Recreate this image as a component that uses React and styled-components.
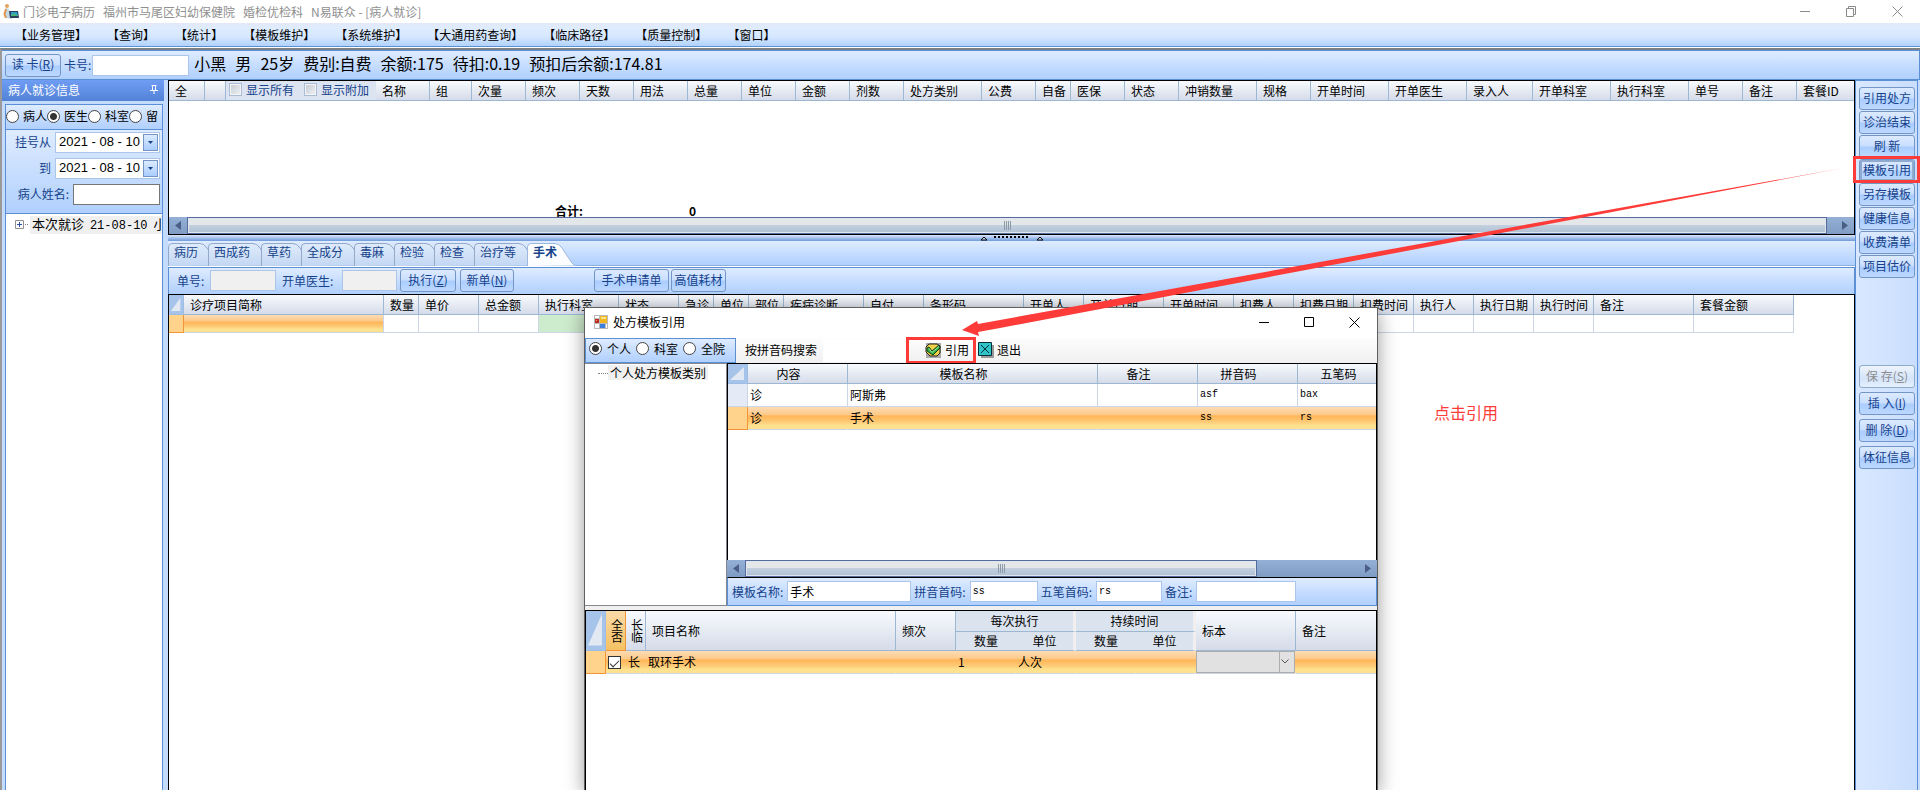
import { Fragment } from "react";
import styled, { createGlobalStyle, css } from "styled-components";

const menus = ["业务管理", "查询", "统计", "模板维护", "系统维护", "大通用药查询", "临床路径", "质量控制", "窗口"];

const patient = ["小黑", "男", "25岁", "费别:自费", "余额:175", "待扣:0.19", "预扣后余额:174.81"];

const orderColumns = [
  ["组", 42], ["次量", 54], ["频次", 54], ["天数", 54], ["用法", 54], ["总量", 54],
  ["单位", 54], ["金额", 54], ["剂数", 54], ["处方类别", 78], ["公费", 54], ["自备", 35],
  ["医保", 54], ["状态", 54], ["冲销数量", 78], ["规格", 54], ["开单时间", 78], ["开单医生", 78],
  ["录入人", 66], ["开单科室", 78], ["执行科室", 78], ["单号", 54], ["备注", 54], ["套餐ID", 78],
];

const itemColumns = [
  ["诊疗项目简称", 200], ["数量", 35], ["单价", 60], ["总金额", 60], ["执行科室", 80], ["状态", 60],
  ["急诊", 35], ["单位", 35], ["部位", 35], ["疾病诊断", 80], ["自付", 60], ["条形码", 100],
  ["开单人", 60], ["开单日期", 80], ["开单时间", 70], ["扣费人", 60], ["扣费日期", 60], ["扣费时间", 60],
  ["执行人", 60], ["执行日期", 60], ["执行时间", 60], ["备注", 100], ["套餐金额", 100],
];

const templateColumns = [["内容", 100], ["模板名称", 250], ["备注", 100], ["拼音码", 100], ["五笔码", 100]];

const templates = [
  { type: "诊", name: "阿斯弗", remark: "", pinyin: "asf", wubi: "bax" },
  { type: "诊", name: "手术", remark: "", pinyin: "ss", wubi: "rs", selected: true },
];

const tabs = [
  ["病历", 40], ["西成药", 53], ["草药", 40], ["全成分", 53], ["毒麻", 40],
  ["检验", 40], ["检查", 40], ["治疗等", 53], ["手术", 48],
];

const railButtons = ["引用处方", "诊治结束", "刷 新", "模板引用", "另存模板", "健康信息", "收费清单", "项目估价"];

const TabShape = ({ width, active }) => {
  const w = width + (active ? 1 : 13);
  return (
    <TabDrawing width={w} height="23" viewBox={`0 0 ${w} 23`}>
      <path
        d={`M.5 23V4Q.5 .5 4 .5H${w - 21}Q${w - 17} .5 ${w - 14} 5L${w - 4} 20Q${w - 2} 22.5 ${w} 22.5`}
        fill={active ? "#fcfdff" : "url(#tabFill)"}
        stroke={active ? "#9db8de" : "#93a9c9"}
      />
    </TabDrawing>
  );
};

const ScrollBar = ({ thumb }) => (
  <ScrollTrack>
    <ScrollButton type="button" aria-label="向左">
      <svg width="6" height="9"><path d="M6 0V9L0 4.5Z" fill="#4b5f86" /></svg>
    </ScrollButton>
    <Thumb $width={thumb}><i /><i /><i /><i /></Thumb>
    <ScrollButton type="button" aria-label="向右" $end>
      <svg width="6" height="9"><path d="M0 0V9L6 4.5Z" fill="#4b5f86" /></svg>
    </ScrollButton>
  </ScrollTrack>
);

const WindowButtons = ({ color, large }) => (
  <Controls $large={large}>
    <button type="button" aria-label="最小化">
      <svg width="11" height="11"><path d="M0 5.5H10" stroke={color} /></svg>
    </button>
    <button type="button" aria-label="最大化">
      <svg width="11" height="11" fill="none" stroke={color}>
        {large ? <path d="M.5 .5H9.5V9.5H.5Z" /> : <path d="M.5 2.5H7.5V10.5H.5ZM2.5 2.5V.5H9.5V8.5H7.5" />}
      </svg>
    </button>
    <button type="button" aria-label="关闭">
      <svg width="11" height="11"><path d="M.5 .5L10.5 10.5M10.5 .5L.5 10.5" stroke={color} /></svg>
    </button>
  </Controls>
);

const Corner = ({ tall }) => (
  <CornerCell rowSpan={tall ? 2 : 1}>
    <svg width="100%" height={tall ? 34 : 14} viewBox="0 0 14 14" preserveAspectRatio="none">
      <path d="M13 0V13H0Z" fill="#e3e9f3" />
    </svg>
  </CornerCell>
);

const DateField = ({ id }) => (
  <DateBox>
    <input id={id} defaultValue="2021 - 08 - 10" />
    <DropButton type="button" aria-label="选择日期">
      <svg width="5" height="3"><path d="M0 0H5L2.5 3Z" fill="#15428b" /></svg>
    </DropButton>
  </DateBox>
);

const Sidebar = () => (
  <Side>
    <SideHeader>
      病人就诊信息
      <svg width="8" height="9" fill="none" stroke="#fff"><path d="M1.5 .5H6.5M2.5 .5V5M5.5 .5V5M0 5.5H8M4 5.5V9" /></svg>
    </SideHeader>
    <SidePanel>
      <RadioRow>
        <label><Radio name="scope" />病人</label>
        <label><Radio name="scope" defaultChecked />医生</label>
        <label><Radio name="scope" />科室</label>
        <label><Radio name="scope" />留</label>
      </RadioRow>
      <Filters>
        <FilterRow>
          <label htmlFor="from">挂号从</label>
          <DateField id="from" />
        </FilterRow>
        <FilterRow>
          <label htmlFor="to">到</label>
          <DateField id="to" />
        </FilterRow>
        <FilterRow>
          <label htmlFor="patient">病人姓名:</label>
          <Field id="patient" $width={87} $dark />
        </FilterRow>
      </Filters>
      <Tree>
        <svg width="14" height="9" fill="none">
          <path d="M.5 .5H8.5V8.5H.5Z" stroke="#919191" />
          <path d="M2 4.5H7M4.5 2V7" stroke="#2b4fa0" />
          <path d="M10 4.5H14" stroke="#808080" strokeDasharray="1 1" />
        </svg>
        <TreeLabel $large>本次就诊 <span>21-08-10</span> 小</TreeLabel>
      </Tree>
    </SidePanel>
  </Side>
);

const Orders = () => (
  <OrderPane>
    <GridArea>
      <Grid>
        <colgroup>
          <col width="36" /><col width="21" /><col width="204" />
          {orderColumns.map(([name, width]) => <col key={name} width={width} />)}
        </colgroup>
        <thead>
          <tr>
            <th>全</th>
            <th />
            <ToggleCell>
              <div>
                <ToggleGroup>
                  <label><Tick type="checkbox" $flat />显示所有</label>
                  <label><Tick type="checkbox" $flat />显示附加</label>
                </ToggleGroup>
                名称
              </div>
            </ToggleCell>
            {orderColumns.map(([name]) => <th key={name}>{name}</th>)}
          </tr>
        </thead>
      </Grid>
      <Totals><span>合计:</span><span>0</span></Totals>
    </GridArea>
    <ScrollBar />
  </OrderPane>
);

const Items = () => (
  <ItemPane>
    <TabBar>
      <svg width="0" height="0">
        <linearGradient id="tabFill" x2="0" y2="1">
          <stop stopColor="#dfebfb" />
          <stop offset="1" stopColor="#c3d7f3" />
        </linearGradient>
      </svg>
      {tabs.map(([name, width], i) => (
        <Tab key={name} type="button" $width={width} $active={i === 8}>
          <TabShape width={width} active={i === 8} />
          <span>{name}</span>
        </Tab>
      ))}
    </TabBar>
    <ItemTools>
      <label htmlFor="no">单号:</label>
      <Field id="no" $width={66} $muted />
      <label htmlFor="doctor">开单医生:</label>
      <Field id="doctor" $width={55} $muted />
      <Button type="button" $width={56}>执行(<u>Z</u>)</Button>
      <Button type="button" $width={54}>新单(<u>N</u>)</Button>
      <ToolGroup>
        <Button type="button" $width={75}>手术申请单</Button>
        <Button type="button" $width={55}>高值耗材</Button>
      </ToolGroup>
    </ItemTools>
    <ItemGrid>
      <Grid>
        <colgroup>
          <col width="15" />
          {itemColumns.map(([name, width]) => <col key={name} width={width} />)}
        </colgroup>
        <thead>
          <tr><Corner />{itemColumns.map(([name]) => <th key={name}>{name}</th>)}</tr>
        </thead>
        <tbody>
          <tr>
            <IndicatorCell $selected />
            {itemColumns.map(([name], i) => <ItemCell key={name} $focus={i === 0} $green={i === 4} />)}
          </tr>
        </tbody>
      </Grid>
      <Note>点击引用</Note>
    </ItemGrid>
  </ItemPane>
);

const TemplateDialog = () => (
  <Dialog>
    <DialogTitle>
      <svg width="14" height="14">
        <path d="M0 0H14V14H0Z" fill="#b9b9b9" />
        <path d="M1 1H5V3H1ZM1 9H5V13H1Z" fill="#fff" />
        <path d="M1 4H5V8H1Z" fill="#c22a1b" />
        <path d="M2 5H3V6H2Z" fill="#f0a090" />
        <path d="M6 1H13V8H6Z" fill="#f2b71f" />
        <path d="M7 2H12V4H7Z" fill="#ffe38a" />
        <path d="M6 9H11V13H6Z" fill="#3d7fe0" />
        <path d="M12 9H13V13H12Z" fill="#fff" />
      </svg>
      处方模板引用
      <WindowButtons color="#000" large />
    </DialogTitle>
    <DialogTools>
      <ScopeBox>
        <label><Radio name="template" defaultChecked />个人</label>
        <label><Radio name="template" />科室</label>
        <label><Radio name="template" />全院</label>
      </ScopeBox>
      <label htmlFor="search">按拼音码搜索</label>
      <SearchInput id="search" />
      <ApplyButton type="button">
        <svg width="17" height="16">
          <path d="M1 1H16V16H1Z" fill="#a9a9a9" />
          <path d="M1 5L4 2H12L15 4V11L12 14H5L1 10Z" fill="#efd24a" stroke="#222" />
          <path d="M2 6L4 5L7 9L14 3L15 6L8 13L2 9Z" fill="#33b24a" stroke="#123d18" />
          <path d="M4 6.5L7 10.5L14 4.5" fill="none" stroke="#a5e6a0" />
        </svg>
        引用
      </ApplyButton>
      <ToolButton type="button">
        <svg width="16" height="16">
          <path d="M3 3H16V16H3Z" fill="#999" />
          <path d="M.5 .5H13.5V13.5H.5Z" fill="#2fc4c8" stroke="#052f38" />
          <path d="M3 3L11 11M11 3L3 11" stroke="#052f38" />
        </svg>
        退出
      </ToolButton>
    </DialogTools>
    <DialogTop>
      <TemplateTree><i /><TreeLabel>个人处方模板类别</TreeLabel></TemplateTree>
      <TemplatePane>
        <TemplateGrid>
          <Grid $centered>
            <colgroup>
              <col width="20" />
              {templateColumns.map(([name, width]) => <col key={name} width={width} />)}
            </colgroup>
            <thead>
              <tr><Corner />{templateColumns.map(([name]) => <th key={name}>{name}</th>)}</tr>
            </thead>
            <tbody>
              {templates.map((row) => (
                <Row key={row.name} $selected={row.selected}>
                  <IndicatorCell $selected={row.selected} />
                  <td>{row.type}</td>
                  <td>{row.name}</td>
                  <td>{row.remark}</td>
                  <CodeCell>{row.pinyin}</CodeCell>
                  <CodeCell>{row.wubi}</CodeCell>
                </Row>
              ))}
            </tbody>
          </Grid>
        </TemplateGrid>
        <ScrollBar thumb={512} />
        <TemplateForm>
          <label htmlFor="tname">模板名称:</label>
          <Field id="tname" $width={124} defaultValue="手术" />
          <label htmlFor="tpinyin">拼音首码:</label>
          <Field id="tpinyin" $width={68} $code defaultValue="ss" />
          <label htmlFor="twubi">五笔首码:</label>
          <Field id="twubi" $width={66} $code defaultValue="rs" />
          <label htmlFor="tremark">备注:</label>
          <Field id="tremark" $width={100} />
        </TemplateForm>
      </TemplatePane>
    </DialogTop>
    <DetailGrid>
      <Grid>
        <colgroup>
          {[20, 20, 20, 250, 60, 60, 60, 60, 60, 100, 100].map((width, i) => <col key={i} width={width} />)}
        </colgroup>
        <thead>
          <tr>
            <Corner tall />
            <StackedHead rowSpan="2" $hot>全否</StackedHead>
            <StackedHead rowSpan="2">长临</StackedHead>
            <th rowSpan="2">项目名称</th>
            <th rowSpan="2">频次</th>
            <GroupHead colSpan="2">每次执行</GroupHead>
            <GroupHead colSpan="2">持续时间</GroupHead>
            <th rowSpan="2">标本</th>
            <th rowSpan="2">备注</th>
          </tr>
          <tr>
            {[0, 1].map((n) => (
              <Fragment key={n}>
                <SubHead>数量</SubHead>
                <SubHead $last>单位</SubHead>
              </Fragment>
            ))}
          </tr>
        </thead>
        <tbody>
          <Row $selected>
            <IndicatorCell $selected />
            <TickCell><Tick type="checkbox" aria-label="选择取环手术" defaultChecked /></TickCell>
            <td>长</td>
            <td>取环手术</td>
            <td />
            <td>1</td>
            <td>人次</td>
            <td />
            <td />
            <SampleCell>
              <SampleSelect aria-label="标本" disabled><option /></SampleSelect>
              <svg width="8" height="5"><path d="M.5 .5L4 4L7.5 .5" fill="none" stroke="#555" /></svg>
            </SampleCell>
            <td />
          </Row>
        </tbody>
      </Grid>
    </DetailGrid>
  </Dialog>
);

const App = () => (
  <Screen>
    <Global />
    <TitleBar>
      <svg width="16" height="16">
        <circle cx="4" cy="2" r="2" fill="#e3a55f" />
        <path d="M3 4L6 5L7 10L10 13L9 15L3 14L2 9Z" fill="#c4d9e6" />
        <path d="M3 5L1.5 10L3 14" fill="none" stroke="#dd9550" strokeWidth="2" />
        <path d="M6 7H15L16 14H7Z" fill="#2b3f5a" />
        <path d="M8 8H14L15 12H8Z" fill="#2a9fcf" />
        <path d="M8 11L11 9L15 12H8Z" fill="#4bb27a" />
      </svg>
      <span>门诊电子病历</span>
      <span>福州市马尾区妇幼保健院</span>
      <span>婚检优检科</span>
      <span>N易联众 - [病人就诊]</span>
      <WindowButtons color="#8a8a8a" />
    </TitleBar>
    <MenuBar>{menus.map((name) => <button key={name} type="button">【{name}】</button>)}</MenuBar>
    <Frame>
      <InfoBar>
        <Button type="button" $width={56}>读 卡(<u>R</u>)</Button>
        <label htmlFor="card">卡号:</label>
        <Field id="card" $width={97} />
        <PatientLine>{patient.map((part) => <span key={part}>{part}</span>)}</PatientLine>
      </InfoBar>
      <Body>
        <Sidebar />
        <Center>
          <Orders />
          <Splitter>
            <svg width="64" height="6">
              <path d="M1 5H7L4 2ZM57 5H63L60 2Z" fill="#cfe0fb" stroke="#000" />
              <path d="M14 2H50" stroke="#000" strokeWidth="2" strokeDasharray="2 2" />
            </svg>
          </Splitter>
          <Items />
        </Center>
        <Rail>
          <RailGroup>
            {railButtons.map((name) => (
              <Button key={name} type="button" $width={56} $pressed={name === "模板引用"}>{name}</Button>
            ))}
          </RailGroup>
          <RailGroup $wide>
            <Button type="button" $width={56} disabled>保 存(<u>S</u>)</Button>
            <Button type="button" $width={56}>插 入(<u>I</u>)</Button>
            <Button type="button" $width={56}>删 除(<u>D</u>)</Button>
            <Button type="button" $width={56}>体征信息</Button>
          </RailGroup>
        </Rail>
      </Body>
    </Frame>
    <TemplateDialog />
    <RailMark />
    <Arrow width="884" height="172" viewBox="962 166 884 172">
      <path d="M962 330L977 321L978 324L1000 320L1480 233L1843 168L1480 237L1000 328L978 332L979 336Z" fill="#fd3b38" />
    </Arrow>
  </Screen>
);

const Global = createGlobalStyle`
  * {
    box-sizing: border-box;
  }
  body {
    margin: 0;
    overflow: hidden;
    background: #fff;
  }
  body, button, input, select, table {
    font-family: "Noto Sans CJK SC", "Noto Sans", sans-serif;
    font-size: 12px;
    line-height: 16px;
    color: #000;
  }
  svg {
    flex: none;
    display: block;
  }
  button {
    margin: 0;
    padding: 0;
    border: 0;
    background: none;
    white-space: pre;
  }
  label {
    white-space: nowrap;
  }
`;

const blueBar = css`
  background: linear-gradient(#dfecff, #c6ddff 50%, #b0d0fd);
`;
const headFill = css`
  background: linear-gradient(#f8fafd, #e6ebf3 50%, #d5dbe9);
`;
const hotFill = css`
  background: linear-gradient(#fcdcb4, #fdc988 36%, #ffb557 40%, #fdc873 65%, #fee391 85%, #fee08e);
`;

const Screen = styled.div`
  position: relative;
  display: flex;
  flex-direction: column;
  min-height: 100vh;
  overflow: hidden;
`;
const TitleBar = styled.header`
  display: flex;
  align-items: center;
  gap: 8px;
  height: 23px;
  padding-left: 3px;
  color: #8f8f8f;
  white-space: nowrap;
  svg + span {
    margin-left: -4px;
  }
`;
const Controls = styled.div`
  display: flex;
  margin-left: auto;
  button {
    display: flex;
    align-items: center;
    justify-content: center;
    width: ${({ $large }) => ($large ? 45 : 46)}px;
    height: 20px;
  }
`;
const MenuBar = styled.nav`
  display: flex;
  gap: 20px;
  height: 24px;
  padding: 0 15px;
  border-bottom: 1px solid #5f8fd0;
  background: linear-gradient(#e3e8f8, #deecfe 20%, #d6e7fe 60%, #b0d2fc);
`;
const Frame = styled.div`
  flex: 1;
  display: flex;
  flex-direction: column;
  margin-top: 1px;
  border-top: 2px solid #7d8287;
  border-left: 2px solid #9a9a9a;
`;
const InfoBar = styled.div`
  display: flex;
  align-items: center;
  height: 30px;
  padding-left: 3px;
  border: solid #5b8fd6;
  border-width: 1px 1px 1px 0;
  color: #15428b;
  ${blueBar}
  label {
    margin: 0 1px 0 3px;
  }
`;
const PatientLine = styled.div`
  display: flex;
  gap: 9px;
  margin-left: 5px;
  padding-bottom: 4px;
  font-size: 16px;
  line-height: 24px;
  color: #000;
  white-space: nowrap;
`;
const Button = styled.button`
  flex: none;
  width: ${({ $width }) => $width}px;
  height: 23px;
  padding-bottom: 2px;
  border: 1px solid #7496c6;
  border-radius: 3px;
  color: #15428b;
  background: linear-gradient(#dceaff, #c9deff 48%, #aacdff 52%, #bcd8ff);
  ${({ $pressed }) => $pressed && css`
    box-shadow: inset 0 0 0 2px #8fa9cf;
  `}
  &:disabled {
    color: #8d8d8d;
    border-color: #8facc9;
    background: linear-gradient(#eef4fd, #d4e4fa 60%, #e6f0fe);
  }
`;
const Field = styled.input`
  flex: none;
  width: ${({ $width }) => $width}px;
  height: 21px;
  padding: 0 2px;
  border: 1px solid ${({ $dark }) => ($dark ? "#767676" : "#abc6ea")};
  border-radius: 0;
  background: ${({ $muted }) => ($muted ? "#f0f0f0" : "#fff")};
  ${({ $code }) => $code && css`
    font-family: "Liberation Mono", monospace;
    font-size: 10px;
  `}
`;
const Radio = styled.input.attrs({ type: "radio" })`
  appearance: none;
  flex: none;
  width: 13px;
  height: 13px;
  margin: 0;
  border: 1px solid #444;
  border-radius: 50%;
  background: #fff;
  &:checked {
    background: radial-gradient(circle, #333 3px, #fff 4px);
  }
`;
const Tick = styled.input`
  appearance: none;
  flex: none;
  width: 13px;
  height: 13px;
  margin: 0;
  border: 1px solid #333;
  background: #fff;
  &:checked {
    display: flex;
    align-items: center;
    justify-content: center;
  }
  &:checked::after {
    content: "";
    width: 8px;
    height: 4px;
    border: solid #333;
    border-width: 0 0 1px 1px;
    transform: rotate(-45deg);
  }
  ${({ $flat }) => $flat && css`
    border-color: #a9bcd6;
    background: linear-gradient(135deg, #c4c9d3, #f0f2f5);
    box-shadow: inset 0 0 0 1px #f4f4f4;
  `}
`;
const Body = styled.div`
  flex: 1;
  display: flex;
  background: #c5dbfb;
`;
const Side = styled.aside`
  flex: none;
  display: flex;
  flex-direction: column;
  width: 162px;
  margin-right: 4px;
`;
const SideHeader = styled.div`
  display: flex;
  align-items: center;
  justify-content: space-between;
  height: 21px;
  padding: 0 6px 2px;
  color: #fff;
  background: linear-gradient(#6f9df4, #5282d6);
`;
const SidePanel = styled.div`
  flex: 1;
  display: flex;
  flex-direction: column;
  margin: 3px 1px 0 3px;
  border: 1px solid #5b8fd6;
  border-bottom: 0;
`;
const RadioRow = styled.div`
  display: flex;
  align-items: center;
  height: 25px;
  padding-bottom: 2px;
  border-bottom: 1px solid #5b8fd6;
  ${blueBar}
  label {
    flex: none;
    display: flex;
    align-items: center;
    gap: 4px;
  }
`;
const Filters = styled.div`
  display: flex;
  flex-direction: column;
  gap: 5px;
  height: 84px;
  padding: 2px 2px 0;
  border-bottom: 1px solid #5b8fd6;
  color: #15428b;
  background: linear-gradient(#dfecff, #b0d0fd);
`;
const FilterRow = styled.div`
  display: flex;
  align-items: center;
  justify-content: flex-end;
  gap: 4px;
  label {
    padding-bottom: 2px;
  }
`;
const DateBox = styled.div`
  display: flex;
  align-items: center;
  width: 105px;
  height: 21px;
  padding: 1px;
  border: 1px solid #abc6ea;
  background: #fff;
  input {
    flex: 1;
    min-width: 0;
    padding: 0 0 2px 2px;
    border: 0;
    font-family: "Liberation Sans", sans-serif;
    font-size: 13px;
  }
`;
const DropButton = styled.button`
  display: flex;
  align-items: center;
  justify-content: center;
  width: 15px;
  height: 17px;
  border: 1px solid #7496c6;
  background: linear-gradient(#dceaff, #aacdff);
`;
const Tree = styled.div`
  flex: 1;
  display: flex;
  align-items: flex-start;
  gap: 1px;
  padding: 2px 0 0 9px;
  overflow: hidden;
  background: #fff;
  svg {
    margin-top: 4px;
  }
`;
const TreeLabel = styled.span`
  padding: 0 2px;
  font-size: ${({ $large }) => ($large ? 13 : 12)}px;
  line-height: 15px;
  background: #f0f0f0;
  white-space: nowrap;
  span {
    margin: 0 3px;
    font-family: "Liberation Mono", monospace;
    font-size: 12px;
  }
`;
const Center = styled.main`
  flex: 1;
  display: flex;
  flex-direction: column;
  min-width: 0;
`;
const OrderPane = styled.section`
  display: flex;
  flex-direction: column;
  height: 155px;
  border: 1px solid #000;
`;
const GridArea = styled.div`
  flex: 1;
  display: flex;
  flex-direction: column;
  justify-content: space-between;
  min-height: 0;
  overflow: hidden;
  background: #fff;
`;
const Grid = styled.table`
  width: 0;
  table-layout: fixed;
  border-collapse: separate;
  border-spacing: 0;
  th, td {
    overflow: hidden;
    white-space: nowrap;
    text-align: left;
    font-weight: normal;
  }
  th {
    height: 20px;
    padding: 0 0 0 6px;
    border: solid #9db8d2;
    border-width: 0 1px 1px 0;
    ${headFill}
  }
  td {
    height: 18px;
    padding: 0 0 0 2px;
    border: solid #cdd6e6;
    border-width: 0 1px 1px 0;
  }
  ${({ $centered }) => $centered && css`
    th {
      padding: 0 18px 0 0;
      text-align: center;
    }
  `}
`;
const ToggleCell = styled.th`
  && {
    padding: 0;
  }
  div {
    display: flex;
    align-items: center;
  }
`;
const ToggleGroup = styled.span`
  display: flex;
  gap: 10px;
  height: 19px;
  padding: 0 7px 2px 3px;
  margin-right: 6px;
  color: #15428b;
  background: #dde4f1;
  label {
    display: flex;
    align-items: center;
    gap: 4px;
  }
`;
const Totals = styled.div`
  display: flex;
  gap: 106px;
  padding-left: 386px;
  font-weight: bold;
  line-height: 12px;
`;
const ScrollTrack = styled.div`
  flex: none;
  display: flex;
  justify-content: space-between;
  height: 17px;
  background: linear-gradient(#95b0d6, #7f9cc4);
`;
const ScrollButton = styled.button`
  display: flex;
  align-items: center;
  justify-content: ${({ $end }) => ($end ? "flex-end" : "center")};
  width: ${({ $end }) => ($end ? 27 : 18)}px;
  padding-right: ${({ $end }) => ($end ? 6 : 0)}px;
`;
const Thumb = styled.div`
  flex: ${({ $width }) => ($width ? `0 0 ${$width}px` : 1)};
  display: flex;
  align-items: center;
  justify-content: center;
  gap: 1px;
  margin-right: ${({ $width }) => ($width ? "auto" : 0)};
  border: 1px solid #566c9c;
  box-shadow: inset 0 0 0 1px #dfe6ee;
  background: linear-gradient(#e3e7ea 45%, #c2cfdf 50%, #b0c0d4);
  i {
    width: 1px;
    height: 9px;
    background: #8e99a6;
  }
`;
const Splitter = styled.div`
  display: flex;
  justify-content: center;
  height: 6px;
  background: linear-gradient(#dbe7fb, #6f9bdc);
`;
const ItemPane = styled.section`
  flex: 1;
  display: flex;
  flex-direction: column;
`;
const TabBar = styled.div`
  display: flex;
  align-items: flex-end;
  height: 25px;
  border-bottom: 1px solid #8db0e0;
  ${blueBar}
`;
const Tab = styled.button`
  position: relative;
  width: ${({ $width }) => $width}px;
  height: 22px;
  padding: 0 0 4px 6px;
  text-align: left;
  color: #15428b;
  font-weight: ${({ $active }) => ($active ? "bold" : "normal")};
  span {
    position: relative;
  }
`;
const TabDrawing = styled.svg`
  position: absolute;
  top: 0;
  left: 0;
`;
const ItemTools = styled.div`
  display: flex;
  align-items: center;
  height: 27px;
  margin-top: 1px;
  padding: 0 0 1px 8px;
  border: 1px solid #5b8fd6;
  border-bottom: 0;
  color: #15428b;
  box-shadow: 0 -1px #fff;
  ${blueBar}
  label {
    width: 33px;
  }
  input + label {
    width: 60px;
    margin-left: 6px;
  }
  input + button {
    margin: 0 4px 0 3px;
  }
`;
const ToolGroup = styled.div`
  display: flex;
  gap: 2px;
  margin-left: 80px;
`;
const ItemGrid = styled.div`
  flex: 1;
  overflow: hidden;
  border: solid #000;
  border-width: 1px 1px 0;
  background: #fff;
`;
const CornerCell = styled.th`
  && {
    padding: 2px;
    background: #a6c3ea;
    border-color: #9dbde6;
  }
`;
const IndicatorCell = styled.td`
  && {
    border-color: ${({ $selected }) => ($selected ? "#f29536" : "#cdd6e6")};
    background: ${({ $selected }) => ($selected ? "#ffd38c" : "#e4eaf6")};
  }
`;
const ItemCell = styled.td`
  ${({ $focus }) => $focus && hotFill}
  ${({ $green }) => $green && css`
    background: #cdebcd;
  `}
`;
const Note = styled.p`
  margin: 67px 0 0 1265px;
  font-size: 16px;
  line-height: 24px;
  color: #fd3b38;
`;
const Rail = styled.aside`
  flex: none;
  display: flex;
  flex-direction: column;
  gap: 87px;
  width: 63px;
  margin-right: 2px;
  padding: 6px 0 0 3px;
  border: solid #5b8fd6;
  border-width: 1px 1px 0;
  background: linear-gradient(90deg, #d9e8ff, #c9defd);
`;
const RailGroup = styled.div`
  display: flex;
  flex-direction: column;
  gap: ${({ $wide }) => ($wide ? 4 : 1)}px;
`;

const Dialog = styled.section`
  position: absolute;
  top: 307px;
  bottom: 0;
  left: 584px;
  width: 794px;
  display: flex;
  flex-direction: column;
  border: 1px solid #606060;
  border-bottom: 0;
  background: #f0f0f0;
  box-shadow: 0 4px 18px rgba(0, 0, 0, 0.4);
`;
const DialogTitle = styled.header`
  display: flex;
  align-items: center;
  gap: 5px;
  height: 30px;
  padding: 0 0 2px 9px;
  background: #fff;
`;
const DialogTools = styled.div`
  display: flex;
  align-items: center;
  height: 25px;
  background: linear-gradient(#fdfdfd, #f0f0f0);
  > label {
    padding-bottom: 2px;
  }
`;
const ScopeBox = styled.div`
  display: flex;
  align-items: center;
  gap: 5px;
  width: 151px;
  height: 25px;
  margin-right: 9px;
  padding: 0 0 4px 3px;
  border: 1px solid #5b8fd6;
  ${blueBar}
  label {
    display: flex;
    align-items: center;
    gap: 5px;
  }
`;
const SearchInput = styled.input`
  width: 83px;
  height: 23px;
  margin-left: 6px;
  border: 0;
  background: #fff;
`;
const ToolButton = styled.button`
  display: flex;
  align-items: center;
  gap: 3px;
  height: 27px;
  padding-bottom: 2px;
`;
const ApplyButton = styled(ToolButton)`
  justify-content: flex-end;
  width: 70px;
  padding: 0 4px 1px 0;
  margin-right: 2px;
  border: 3px solid #fd3b38;
`;
const DialogTop = styled.div`
  display: flex;
  height: 243px;
`;
const TemplateTree = styled.div`
  flex: none;
  display: flex;
  align-items: flex-start;
  width: 142px;
  padding: 1px 0 0 13px;
  border: 1px solid #828790;
  border-left: 0;
  background: #fff;
  i {
    width: 10px;
    margin-top: 8px;
    border-top: 1px dotted #808080;
  }
`;
const TemplatePane = styled.div`
  flex: 1;
  display: flex;
  flex-direction: column;
  min-width: 0;
`;
const TemplateGrid = styled.div`
  flex: 1;
  overflow: hidden;
  border: solid #000;
  border-width: 1px 1px 0;
  background: #fff;
`;
const Row = styled.tr`
  && td {
    height: 23px;
    ${({ $selected }) => $selected && css`
      border-right-color: transparent;
      background-clip: border-box;
      ${hotFill}
    `}
  }
  && ${IndicatorCell} {
    ${({ $selected }) => $selected && css`
      border-right-color: #f29536;
      background: #ffd38c;
    `}
  }
`;
const CodeCell = styled.td`
  font-family: "Liberation Mono", monospace;
  font-size: 10px;
`;
const TemplateForm = styled.div`
  display: flex;
  align-items: center;
  height: 29px;
  padding-left: 4px;
  border: 1px solid #5b8fd6;
  border-top-color: #000;
  color: #15428b;
  ${blueBar}
  label {
    padding-right: 4px;
  }
  input + label {
    padding-left: 3px;
  }
`;
const DetailGrid = styled.div`
  flex: 1;
  overflow: hidden;
  margin-top: 4px;
  border: solid #000;
  border-width: 1px 1px 0;
  background: #fff;
`;
const StackedHead = styled.th`
  && {
    padding: 0 2px 0 5px;
    line-height: 12px;
    white-space: normal;
    word-break: break-all;
    ${({ $hot }) => $hot && css`
      border-color: #f29536;
      background: linear-gradient(#fadba8, #f5c162);
    `}
  }
`;
const GroupHead = styled.th`
  && {
    height: 21px;
    padding: 0;
    text-align: center;
    border-right: 3px solid #f1efef;
    background: #dbe3ee;
  }
`;
const SubHead = styled.th`
  && {
    height: 19px;
    padding: 0;
    text-align: center;
    border-right: ${({ $last }) => ($last ? "3px solid #f1efef" : 0)};
    background: #dbe3ee;
  }
`;
const TickCell = styled.td`
  input {
    display: flex;
  }
`;
const SampleCell = styled.td`
  && {
    position: relative;
    padding: 0;
  }
  svg {
    position: absolute;
    top: 8px;
    right: 6px;
  }
`;
const SampleSelect = styled.select`
  appearance: none;
  display: block;
  width: 99px;
  height: 22px;
  border: 1px solid #adadad;
  border-radius: 0;
  opacity: 1;
  background: linear-gradient(90deg, #e1e1e1 82px, #adadad 82px, #adadad 83px, #e1e1e1 83px);
`;
const RailMark = styled.div`
  position: absolute;
  top: 156px;
  right: 0;
  width: 67px;
  height: 27px;
  border: 3px solid #fd3b38;
  pointer-events: none;
`;
const Arrow = styled.svg`
  position: absolute;
  top: 166px;
  left: 962px;
  pointer-events: none;
`;

export default App;
